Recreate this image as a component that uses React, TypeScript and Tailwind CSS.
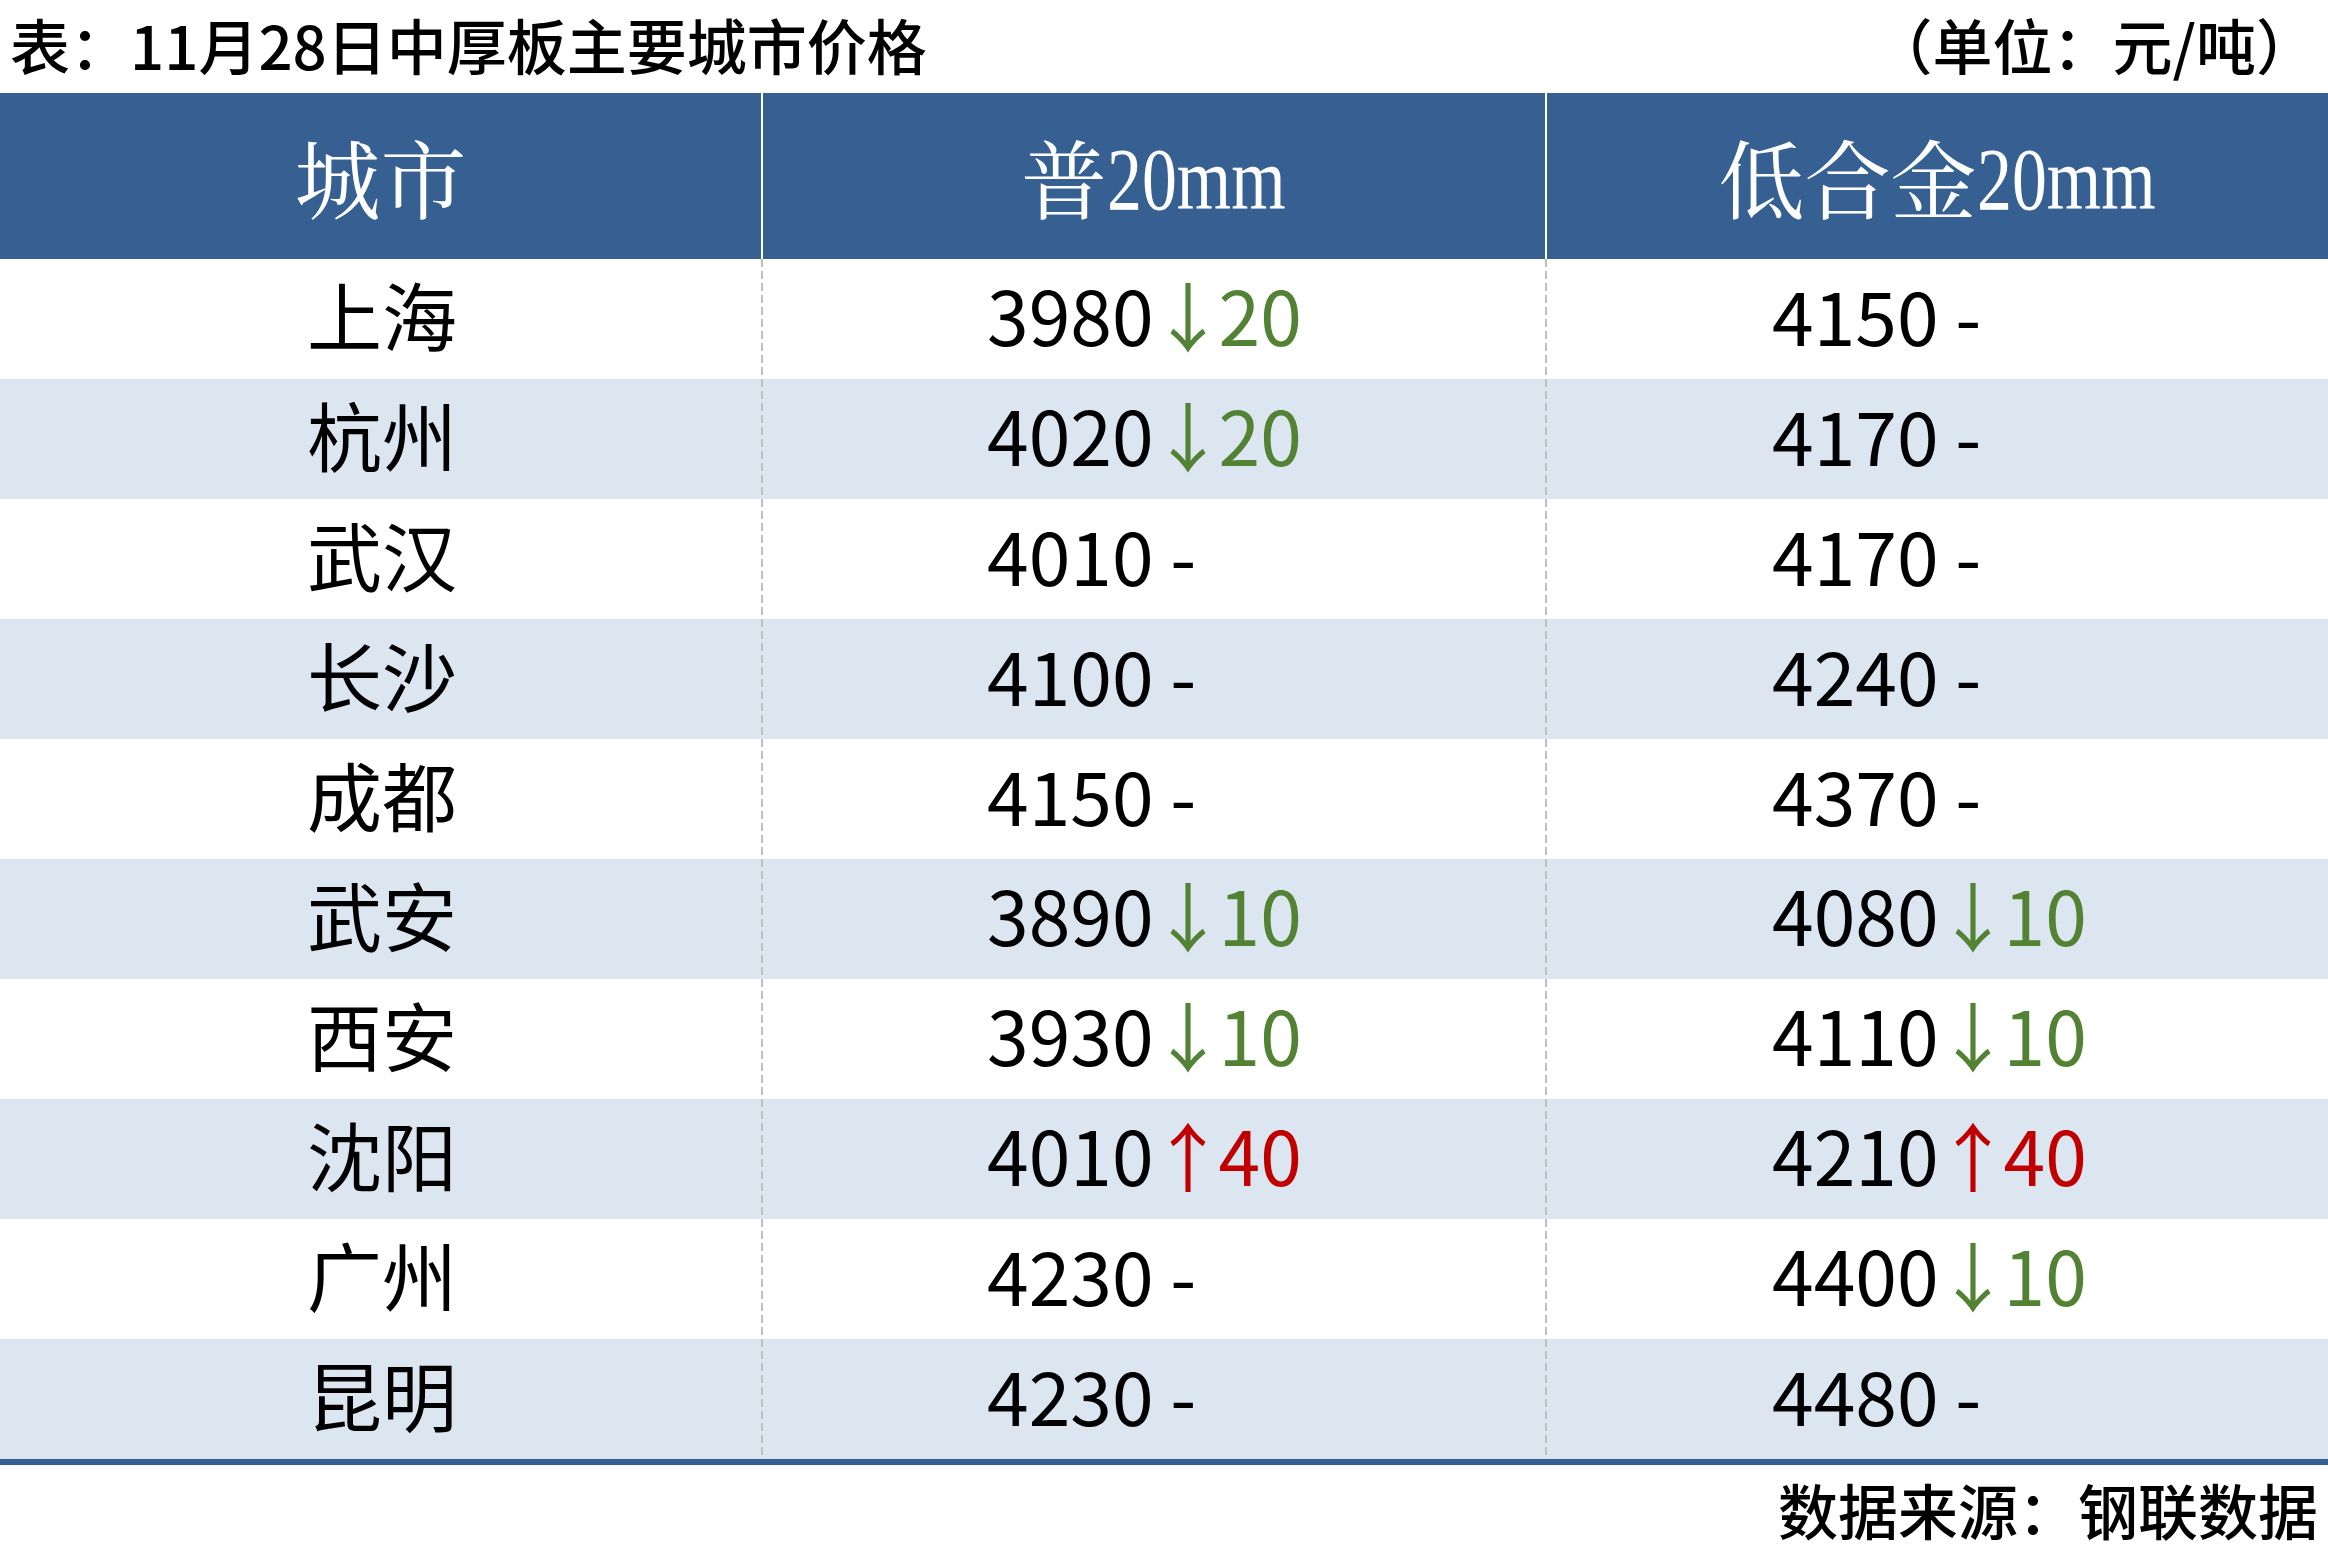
import React from 'react';

type Change = { dir: 'up' | 'down'; n: string } | null;
type Row = { city: string; a: string; ac: Change; b: string; bc: Change };

const rows: Row[] = [
  { city: '上海', a: '3980', ac: { dir: 'down', n: '20' }, b: '4150', bc: null },
  { city: '杭州', a: '4020', ac: { dir: 'down', n: '20' }, b: '4170', bc: null },
  { city: '武汉', a: '4010', ac: null, b: '4170', bc: null },
  { city: '长沙', a: '4100', ac: null, b: '4240', bc: null },
  { city: '成都', a: '4150', ac: null, b: '4370', bc: null },
  { city: '武安', a: '3890', ac: { dir: 'down', n: '10' }, b: '4080', bc: { dir: 'down', n: '10' } },
  { city: '西安', a: '3930', ac: { dir: 'down', n: '10' }, b: '4110', bc: { dir: 'down', n: '10' } },
  { city: '沈阳', a: '4010', ac: { dir: 'up', n: '40' }, b: '4210', bc: { dir: 'up', n: '40' } },
  { city: '广州', a: '4230', ac: null, b: '4400', bc: { dir: 'down', n: '10' } },
  { city: '昆明', a: '4230', ac: null, b: '4480', bc: null },
];

// dashed grey column rule, drawn as a background stripe on the left edge
const dashed =
  'bg-[image:repeating-linear-gradient(to_bottom,#bfbfbf_0px,#bfbfbf_8px,transparent_8px,transparent_12px)] bg-[length:2px_100%] bg-no-repeat bg-left';

function Price({ v, c }: { v: string; c: Change }) {
  return (
    <span className="whitespace-pre">
      {v}
      {c === null ? (
        ' -'
      ) : c.dir === 'down' ? (
        <span className="text-[#548235]">
          <span className="-ml-[3px] -mr-[7px]">↓</span>
          {c.n}
        </span>
      ) : (
        <span className="text-[#c00000]">
          <span className="-ml-[3px] -mr-[7px]">↑</span>
          {c.n}
        </span>
      )}
    </span>
  );
}

function Mm() {
  return (
    <span className="inline-block w-[180px] whitespace-nowrap">
      <span className="inline-block origin-left scale-x-[0.785] font-['Liberation_Serif',serif] text-[89px]">20mm</span>
    </span>
  );
}

export default function App() {
  return (
    <div className="w-[2328px] h-[1559px] bg-white text-black font-['Noto_Sans_CJK_SC',sans-serif] flex flex-col">
      <div className="h-[93px] flex items-center justify-between pl-[10px] pr-[12px] pb-[6px] text-[60px] font-medium leading-none">
        <span>表：11月28日中厚板主要城市价格</span>
        <span>（单位：元/吨）</span>
      </div>

      {/* header */}
      <div className="grid grid-cols-[761px_784px_783px] h-[166px] bg-[#366092] text-white text-[86px] leading-none font-['Noto_Serif_CJK_SC','Noto_Sans_CJK_SC',serif]">
        <div className="flex items-center justify-center">城市</div>
        <div className="flex items-center justify-center border-l-2 border-white">
          普<Mm />
        </div>
        <div className="flex items-center justify-center border-l-2 border-white">
          低合金<Mm />
        </div>
      </div>

      {/* body */}
      {rows.map((r, i) => (
        <div
          key={r.city}
          className={`grid grid-cols-[761px_784px_783px] h-[120px] text-[75px] leading-none ${i % 2 ? 'bg-[#dce6f1]' : 'bg-white'}`}
        >
          <div className="flex items-center justify-center pb-[12px] pl-[3px]">{r.city}</div>
          <div className={`flex items-center pl-[226px] pb-[11px] ${dashed}`}>
            <Price v={r.a} c={r.ac} />
          </div>
          <div className={`flex items-center pl-[227px] pb-[11px] ${dashed}`}>
            <Price v={r.b} c={r.bc} />
          </div>
        </div>
      ))}
      <div className="h-[6px] bg-[#366092]" />

      <div className="flex-1 flex items-center justify-end pr-[10px] pb-[6px] text-[60px] font-medium leading-none">
        数据来源：钢联数据
      </div>
    </div>
  );
}
